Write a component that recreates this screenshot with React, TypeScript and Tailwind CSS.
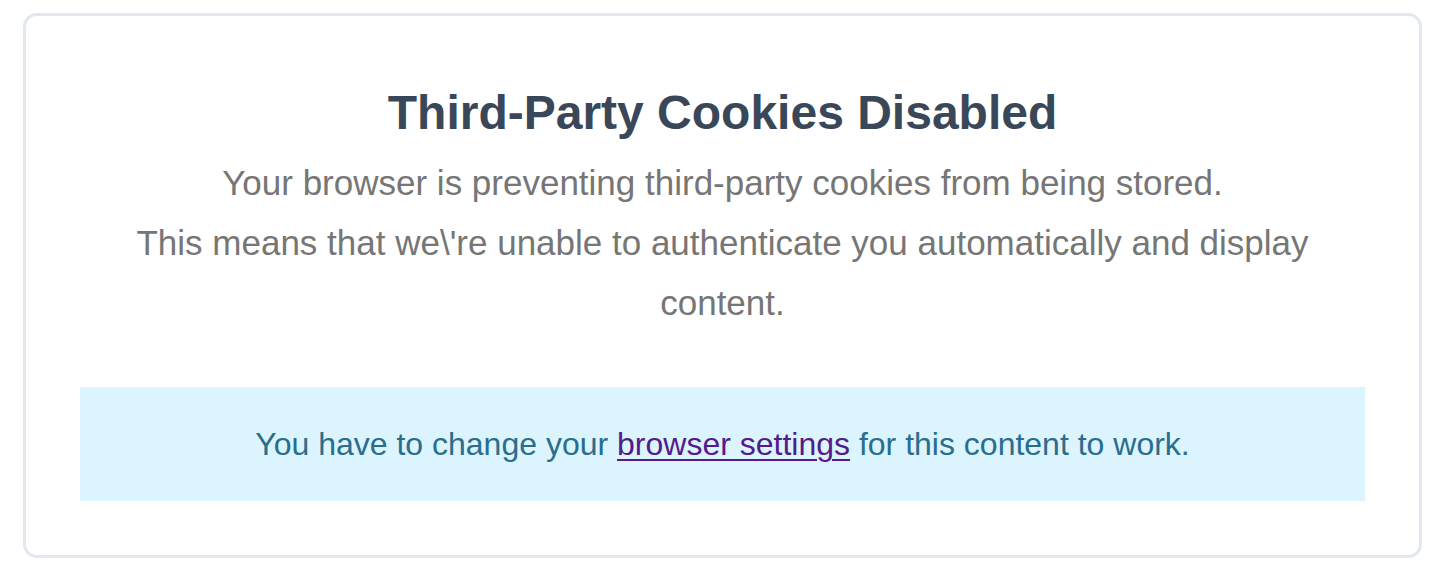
import React from "react";

export default function App() {
  return (
    <div className="min-h-[576px] bg-white pt-[13px] pl-[23px] font-['Liberation_Sans',Arial,sans-serif]">
      {/* Notice card */}
      <div className="w-[1399px] h-[545px] rounded-[14px] border-[3px] border-[#e2e8f0] px-[54px] pt-[68px] pb-[54px] text-center">
        <h1 className="text-[48px] leading-[58px] font-bold text-[#394758]">
          Third-Party Cookies Disabled
        </h1>
        <p className="mt-[11px] text-[35px] leading-[60px] text-[#767676]">
          Your browser is preventing third-party cookies from being stored.
          <br />
          {"This means that we\\'re unable to authenticate you automatically and display content."}
        </p>

        {/* Info box */}
        <div className="mt-[54px] bg-[#dbf4fd] py-[30px] text-[32px] leading-[54px] text-[#2a6d8c]">
          You have to change your{" "}
          <a href="#" className="text-[#551a8b] underline underline-offset-[4px] decoration-2">
            browser settings
          </a>{" "}
          for this content to work.
        </div>
      </div>
    </div>
  );
}
